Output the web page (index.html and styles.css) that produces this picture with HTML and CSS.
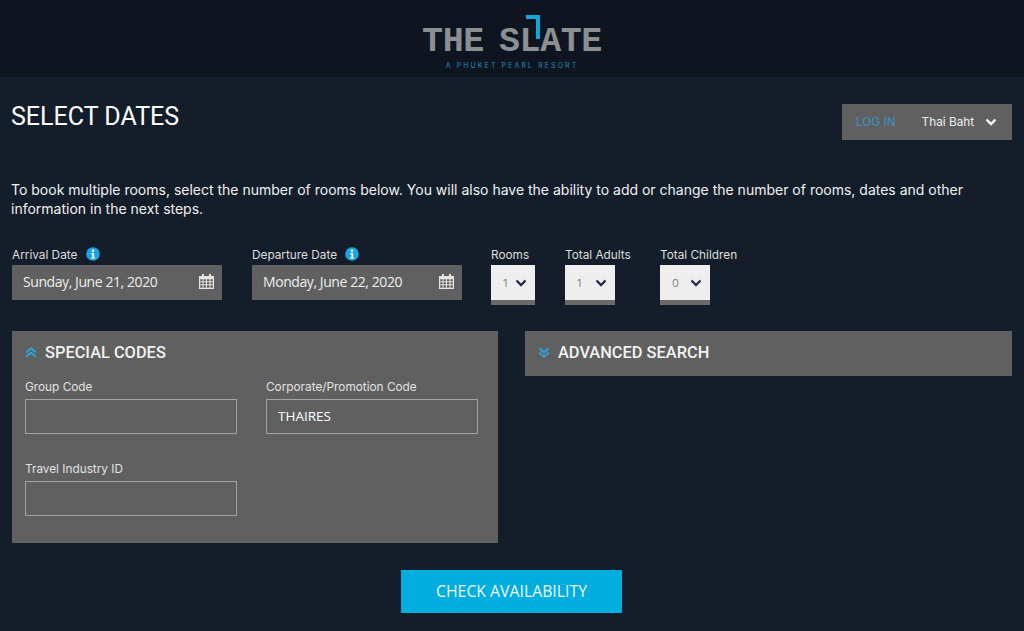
FILE: index.html
```html
<!DOCTYPE html>
<html lang="en">

<head>
   <meta charset="UTF-8">
   <meta name="viewport" content="width=device-width, initial-scale=1.0">
   <title>The Slate - Select Dates</title>
   <link rel="stylesheet" href="styles.css">
</head>

<body>
   <svg class="icon-defs" width="0" height="0">
      <symbol id="chevron" viewBox="0 0 12 8">
         <path d="M1.5 1.5 6 6l4.5-4.5" fill="none" stroke="currentColor" stroke-width="2.4"/>
      </symbol>
      <symbol id="info" viewBox="0 0 14 14">
         <circle cx="7" cy="7" r="6.8" fill="#1ba4de"/>
         <circle cx="7" cy="3.7" r="1.3" fill="#fff"/>
         <path d="M5.3 6h2.8v4.2h1v1.2H5.2v-1.2h1.2V7.2H5.3z" fill="#fff"/>
      </symbol>
      <symbol id="calendar" viewBox="0 0 15 15">
         <path fill-rule="evenodd" fill="currentColor" d="M3 0h2v2h5V0h2v2h3v13H0V2h3zM1.2 5.2v2h2.3v-2zm3.3 0v2h2.4v-2zm3.5 0v2h2.4v-2zm3.5 0v2h2.3v-2zM1.2 8.2v2h2.3v-2zm3.3 0v2h2.4v-2zm3.5 0v2h2.4v-2zm3.5 0v2h2.3v-2zM1.2 11.2v2.6h2.3v-2.6zm3.3 0v2.6h2.4v-2.6zm3.5 0v2.6h2.4v-2.6zm3.5 0v2.6h2.3v-2.6z"/>
      </symbol>
      <symbol id="double-up" viewBox="0 0 12 11">
         <path d="M1.2 5.2 6 1.4l4.8 3.8M1.2 9.6 6 5.8l4.8 3.8" fill="none" stroke="currentColor" stroke-width="2"/>
      </symbol>
      <symbol id="double-down" viewBox="0 0 12 11">
         <path d="M1.2 1.4 6 5.2l4.8-3.8M1.2 5.8 6 9.6l4.8-3.8" fill="none" stroke="currentColor" stroke-width="2"/>
      </symbol>
   </svg>

   <header class="site-header">
      <div class="logo">
         <p class="logo-name">THE SLATE</p>
         <svg class="logo-mark" viewBox="0 0 16 24" width="16" height="24">
            <path d="M1 2h12v22" fill="none" stroke="#12a5d8" stroke-width="4"/>
         </svg>
         <p class="logo-sub">A PHUKET PEARL RESORT</p>
      </div>
   </header>

   <main class="content">
      <div class="top-row">
         <h1 class="title">SELECT DATES</h1>
         <div class="account-bar">
            <a class="login-link" href="#">LOG IN</a>
            <span class="currency">Thai Baht</span>
            <svg class="currency-arrow"><use href="#chevron"/></svg>
         </div>
      </div>

      <p class="intro">To book multiple rooms, select the number of rooms below. You will also have the ability to add or change the number of rooms, dates and other information in the next steps.</p>

      <div class="search-row">
         <div class="date-field">
            <label class="field-label">Arrival Date <svg class="info-icon"><use href="#info"/></svg></label>
            <div class="date-box">
               <span>Sunday, June 21, 2020</span>
               <svg class="calendar-icon"><use href="#calendar"/></svg>
            </div>
         </div>
         <div class="date-field">
            <label class="field-label">Departure Date <svg class="info-icon"><use href="#info"/></svg></label>
            <div class="date-box">
               <span>Monday, June 22, 2020</span>
               <svg class="calendar-icon"><use href="#calendar"/></svg>
            </div>
         </div>
         <div class="count-field rooms">
            <label class="field-label">Rooms</label>
            <div class="count-box"><span>1</span><svg class="count-arrow"><use href="#chevron"/></svg></div>
         </div>
         <div class="count-field adults">
            <label class="field-label">Total Adults</label>
            <div class="count-box"><span>1</span><svg class="count-arrow"><use href="#chevron"/></svg></div>
         </div>
         <div class="count-field children">
            <label class="field-label">Total Children</label>
            <div class="count-box"><span>0</span><svg class="count-arrow"><use href="#chevron"/></svg></div>
         </div>
      </div>

      <div class="panels">
         <section class="panel">
            <h2 class="panel-title"><svg class="panel-icon"><use href="#double-up"/></svg>SPECIAL CODES</h2>
            <div class="code-grid">
               <div class="code-field">
                  <label class="code-label">Group Code</label>
                  <input class="code-input" type="text">
               </div>
               <div class="code-field">
                  <label class="code-label">Corporate/Promotion Code</label>
                  <input class="code-input" type="text" value="THAIRES">
               </div>
               <div class="code-field">
                  <label class="code-label">Travel Industry ID</label>
                  <input class="code-input" type="text">
               </div>
            </div>
         </section>
         <section class="panel panel-closed">
            <h2 class="panel-title"><svg class="panel-icon"><use href="#double-down"/></svg>ADVANCED SEARCH</h2>
         </section>
      </div>

      <div class="action-row">
         <button class="check-btn">CHECK AVAILABILITY</button>
      </div>
   </main>
</body>

</html>
```

FILE: styles.css
```css
* {
   box-sizing: border-box;
}

html, body {
   height: 631px;
   overflow: hidden;
}

body {
   margin: 0;
   background-color: #141e2b;
   color: #eee;
   font-family: Inter, "Open Sans", sans-serif;
}

.icon-defs {
   position: absolute;
}

.site-header {
   height: 77px;
   background-color: #0e1520;
   display: flex;
   justify-content: center;
}

.logo {
   position: relative;
   width: 182px;
   text-align: center;
}

.logo-name {
   margin: 27px 0 0;
   height: 31px;
   font-family: "Liberation Mono", monospace;
   font-size: 35px;
   font-weight: bold;
   line-height: 31px;
   letter-spacing: -0.4px;
   word-spacing: -5.5px;
   white-space: nowrap;
   color: #8b8f92;
}

.logo-mark {
   position: absolute;
   left: 104px;
   top: 15px;
}

.logo-sub {
   margin: 3px 0 0;
   font-size: 7px;
   line-height: 9px;
   letter-spacing: 2.1px;
   white-space: nowrap;
   color: #1a8fbb;
}

.content {
   padding: 0 12px;
}

.top-row {
   display: flex;
   justify-content: space-between;
   align-items: flex-start;
   padding-top: 27px;
}

.title {
   margin: 0 0 0 -1px;
   font-family: Roboto, sans-serif;
   font-size: 25px;
   font-weight: 400;
   line-height: 26px;
   color: #fff;
}

.account-bar {
   display: flex;
   align-items: center;
   width: 170px;
   height: 36px;
   background-color: #606060;
   font-size: 11.8px;
}

.login-link {
   margin-left: 14px;
   color: #3d94c4;
   text-decoration: none;
}

.currency {
   margin-left: 26px;
   color: #eee;
}

.currency-arrow {
   width: 12px;
   height: 8px;
   margin-left: 11px;
   color: #fff;
}

.intro {
   margin: 40px 0 0 -1px;
   font-size: 14px;
   line-height: 19px;
   color: #f0f0f0;
}

.search-row {
   display: flex;
   margin-top: 29px;
}

.field-label {
   display: block;
   height: 18px;
   font-size: 11.8px;
   line-height: 16px;
   color: #ddd;
   white-space: nowrap;
}

.info-icon {
   width: 14px;
   height: 14px;
   margin-left: 5px;
   vertical-align: -2px;
}

.date-field {
   width: 210px;
   margin-right: 30px;
}

.date-box {
   display: flex;
   justify-content: space-between;
   align-items: center;
   height: 35px;
   padding: 0 8px 2px 11px;
   background-color: #606060;
   font-family: "Open Sans", sans-serif;
   font-size: 14px;
   letter-spacing: -0.42px;
   color: #eee;
}

.calendar-icon {
   width: 15px;
   height: 15px;
   color: #e4e4e4;
}

.count-field {
   margin-right: 30px;
}

.rooms {
   width: 44px;
   margin-left: -1px;
}

.adults {
   width: 50px;
   margin-right: 45px;
}

.children {
   width: 50px;
}

.count-box {
   display: flex;
   justify-content: space-between;
   align-items: center;
   height: 40px;
   padding: 0 8px 0 12px;
   background-color: #eee;
   border-bottom: 5px solid #6a6a6a;
   font-size: 11px;
   color: #888;
}

.count-arrow {
   width: 12px;
   height: 8px;
   color: #2c2c4a;
}

.panels {
   display: grid;
   grid-template-columns: 486px 487px;
   column-gap: 27px;
   align-items: start;
   margin-top: 26px;
}

.panel {
   height: 212px;
   padding: 0 13px;
   background-color: #606060;
}

.panel-closed {
   height: 45px;
}

.panel-title {
   display: flex;
   align-items: center;
   height: 43px;
   margin: 0;
   font-family: Roboto, sans-serif;
   font-size: 16.4px;
   font-weight: 500;
   color: #f2f2f2;
}

.panel-icon {
   width: 12px;
   height: 11px;
   margin-right: 8px;
   color: #2fa3d8;
}

.code-grid {
   display: grid;
   grid-template-columns: 212px 212px;
   column-gap: 29px;
   row-gap: 26px;
   margin-top: 4px;
}

.code-label {
   display: block;
   height: 21px;
   font-size: 11.8px;
   line-height: 18px;
   color: #e2e2e2;
}

.code-input {
   display: block;
   width: 100%;
   height: 35px;
   padding: 0 11px 2px;
   background: transparent;
   border: 1px solid #a3a3a3;
   border-radius: 0;
   font-family: "Open Sans", sans-serif;
   font-size: 13.5px;
   color: #fff;
}

.action-row {
   display: flex;
   justify-content: center;
   margin-top: 27px;
   padding-right: 1px;
}

.check-btn {
   width: 221px;
   height: 43px;
   padding-bottom: 3px;
   background-color: #00addf;
   border: none;
   font-family: "Open Sans", sans-serif;
   font-size: 15.8px;
   color: #f4f4f4;
   cursor: pointer;
}
```
